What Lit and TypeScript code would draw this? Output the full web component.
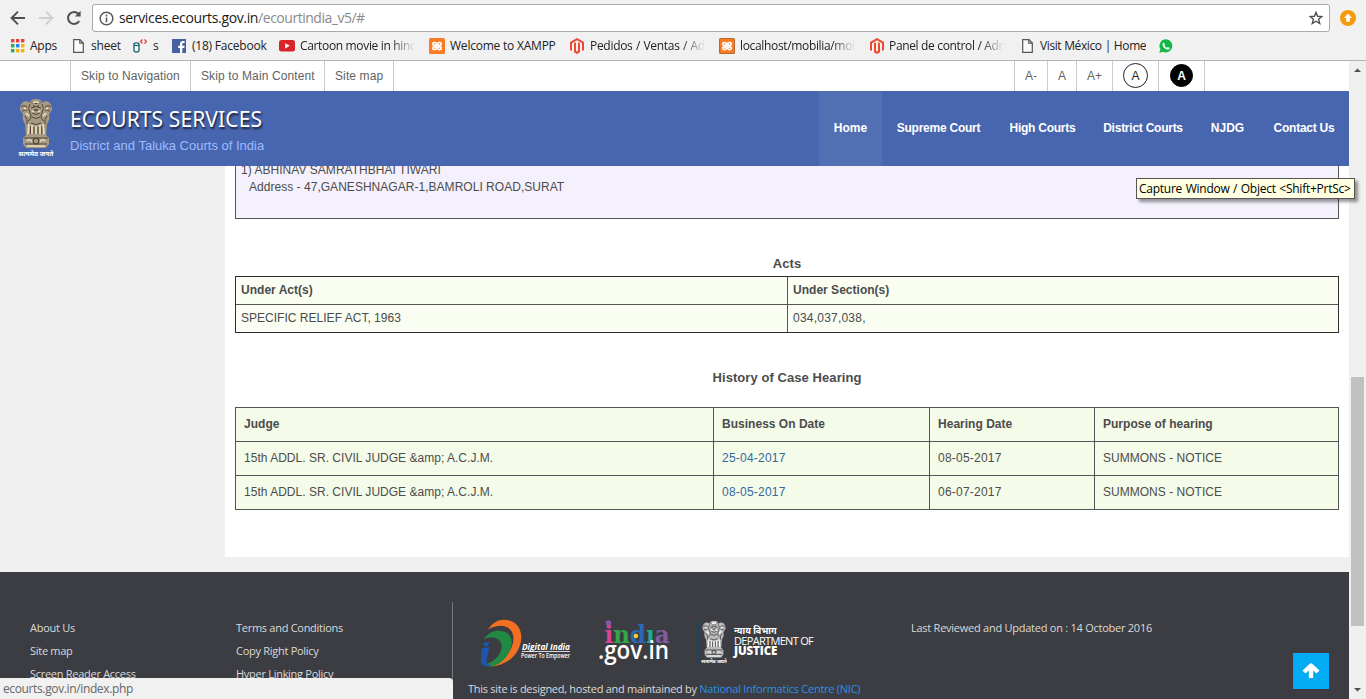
import { LitElement, html, svg, css } from "lit";
import { customElement, property } from "lit/decorators.js";

const pageIcon = svg`<svg width="12" height="14" viewBox="0 0 12 14"><path d="M.7.7H7L10.3 4V13.3H.7Z" fill="#fafafa" stroke="#555" stroke-width="1.2"/><path d="M6.8.8V4.2H10.2" fill="none" stroke="#555" stroke-width="1.2"/></svg>`;
const xamppIcon = (edge: string) => svg`<svg width="16" height="16" viewBox="0 0 16 16"><rect width="16" height="16" rx="1.6" fill=${edge}/><rect x="1" y="1" width="14" height="14" rx="1" fill="#fb7a24"/><rect x="3.800" y="4.500" width="3.400" height="2.800" rx="1.300" fill="none" stroke="#fff" stroke-width="1.700"/><rect x="8.800" y="4.500" width="3.400" height="2.800" rx="1.300" fill="none" stroke="#fff" stroke-width="1.700"/><rect x="3.800" y="8.800" width="3.400" height="2.800" rx="1.300" fill="none" stroke="#fff" stroke-width="1.700"/><rect x="8.800" y="8.800" width="3.400" height="2.800" rx="1.300" fill="none" stroke="#fff" stroke-width="1.700"/><path d="M5 8H11M8 6.500V9.500" stroke="#fff" stroke-width="1.600"/></svg>`;
const magentoIcon = svg`<svg width="14" height="16" viewBox="0 0 14 16"><path d="M7 0L14 4V12L12 13.1V5.2L7 2.3L2 5.2V13.1L0 12V4Z" fill="#ee4a32"/><path d="M4 5.2L6 4.2V13L7 13.6L8 13V4.2L10 5.2V14.3L7 16L4 14.3Z" fill="#ee4a32"/></svg>`;
const icons = {
  apps: svg`<svg width="15" height="14" viewBox="0 0 15 14">${["#ea4335", "#ea4335", "#ea4335", "#34a853", "#2b87f0", "#f5b400", "#34a853", "#f5b400", "#f5b400"].map((c, i) => svg`<rect x=${1 + (i % 3) * 5} y=${Math.floor(i / 3) * 5} width="3.4" height="3.4" fill=${c}/>`)}</svg>`,
  page: pageIcon,
  jar: svg`<svg width="14" height="14" viewBox="0 0 14 14"><path d="M1 5.5V11.5C1 13.5 6 13.5 6 11.5V5.500" fill="#fff" stroke="#155d68" stroke-width="1.3"/><ellipse cx="3.5" cy="5.2" rx="2.6" ry="1.4" fill="#fff" stroke="#155d68" stroke-width="1.2"/><path d="M9.500 .5L7.500 2.500L9.500 4.500M11.500 .5L13.500 2.500L11.500 4.500" fill="none" stroke="#e33" stroke-width="1.2"/></svg>`,
  facebook: svg`<svg width="14" height="14" viewBox="0 0 14 14"><rect width="14" height="14" fill="#4760a2"/><path d="M8 14V8.9H6.2V6.7H8V5C8 3 9.2 2 11 2H12.6V4.1H11.5C10.6 4.1 10.3 4.5 10.3 5.2V6.7H12.6L12.3 8.9H10.3V14Z" fill="#fff"/></svg>`,
  youtube: svg`<svg width="16" height="12" viewBox="0 0 16 12"><rect width="16" height="11.6" rx="2.4" fill="#d9252a"/><path d="M6.2 3.2V8.4L10.8 5.8Z" fill="#fff"/></svg>`,
  xampp: xamppIcon("#fb7a24"),
  xamppDark: xamppIcon("#b9682f"),
  magento: magentoIcon,
  whatsapp: svg`<svg width="14" height="14" viewBox="0 0 14 14"><path d="M7.2.2A6.6 6.6 0 1 1 4 12.8L.3 13.8L1.4 10.2A6.6 6.6 0 0 1 7.2.2Z" fill="#12b845"/><path d="M4.9 3.5L6 5.5L5.4 6.4C5.9 7.5 6.8 8.3 7.9 8.8L8.8 8L10.8 9.1C10.6 10.7 9.2 11 8 10.6C5.7 9.9 4 8.1 3.6 6.1C3.4 4.7 3.9 3.7 4.9 3.5Z" fill="#fff"/></svg>`,
};

const bookmarks: { icon: keyof typeof icons; label: string; cls?: string }[] = [
  { icon: "apps", label: "Apps", cls: "apps" },
  { icon: "page", label: "sheet" },
  { icon: "jar", label: "s" },
  { icon: "facebook", label: "(18) Facebook" },
  { icon: "youtube", label: "Cartoon movie in hindi", cls: "fade tight" },
  { icon: "xampp", label: "Welcome to XAMPP", cls: "near" },
  { icon: "magento", label: "Pedidos / Ventas / Adn", cls: "fade wide" },
  { icon: "xamppDark", label: "localhost/mobilia/mob", cls: "fade tight" },
  { icon: "magento", label: "Panel de control / Adm", cls: "fade tight" },
  { icon: "page", label: "Visit México | Home", cls: "last" },
  { icon: "whatsapp", label: "" },
];

@customElement("lion-emblem")
export class LionEmblem extends LitElement {
  @property() tone = "gold";
  static styles = css`
    :host { display: block; }
    svg { display: block; width: 100%; height: 100%; }
    .motto { font: bold 6.5px "Noto Sans", "Noto Sans Devanagari", "DejaVu Sans", sans-serif; }
  `;
  render() {
    const gold = this.tone === "gold";
    const base = gold ? "#a89a82" : "#b9b9b9";
    const dark = gold ? "#51473c" : "#3c3c40";
    const light = gold ? "#eee0bd" : "#ffffff";
    return html`<svg viewBox="0 0 36 60" preserveAspectRatio="none">
      <path d="M12 5C12 2 15 1 18 1C21 1 24 2 24 5C27 2 32 3 33 7C35 10 34 13 31 16C32 20 31 23 29 26L28 37L31 40V46L28 50H8L5 46V40L8 37L7 26C5 23 4 20 5 16C2 13 1 10 3 7C4 3 9 2 12 5Z" fill=${base}/>
      <path d="M13 4C15 6 21 6 23 4M13 10Q18 7 23 10M3 9Q6 6 9 9M27 9Q30 6 33 9M4 13L9 12M27 12L32 13M12 6Q9 10 12 15T10 23M24 6Q27 10 24 15T26 23M14 15Q18 18 22 15M14 19Q18 22 22 19M7 18Q10 21 9 26M29 18Q26 21 27 26M13 25Q18 28 23 25M6 40H30M7 46H29" fill="none" stroke=${dark} stroke-width="1"/>
      <path d="M15 8H16.5M19.5 8H21M16 12H20" stroke=${dark} stroke-width="1.6"/>
      <path d="M11 26L10 36M14 27V36M18 28V36M22 27V36M25 26L26 36M15 5Q18 3 21 5M14 13L16 14M22 13L20 14M6 10L8 11M30 10L28 11M8 15L11 18M28 15L25 18" fill="none" stroke=${light} stroke-width="1.7"/>
      <path d="M12.5 28V36M16 29V36M20 29V36M23.7 28V36" fill="none" stroke=${dark} stroke-width="1"/>
      <circle cx="18" cy="43" r="2.8" fill=${base} stroke=${dark} stroke-width="1.2"/>
      <path d="M9 43Q12 40 14 44M22 44Q24 40 27 43M9 48H27" fill="none" stroke=${light} stroke-width="1.3"/>
      <text class="motto" x="0.5" y="58" textLength="35" lengthAdjust="spacingAndGlyphs" fill="#fff">सत्यमेव जयते</text>
    </svg>`;
  }
}

@customElement("browser-chrome")
export class BrowserChrome extends LitElement {
  static styles = css`
    :host { display: flex; flex-direction: column; height: 61px; box-sizing: border-box; background: #f1f1f1; border-bottom: 1px solid #b4b4b4; font: 12px "Open Sans", sans-serif; color: #222; padding-top: 4px; }
    svg { display: block; flex: none; }
    .bar { display: flex; height: 28px; }
    .nav { width: 92px; display: flex; align-items: center; padding-left: 10px; box-sizing: border-box; gap: 12px; }
    .omnibox { width: 1238px; box-sizing: border-box; border: 1px solid #a9a9a9; border-radius: 3px; background: #fff; display: flex; align-items: center; padding: 0 6px; }
    .url { flex: 1; margin-left: 5px; font-size: 14px; letter-spacing: -0.35px; color: #1a1a1a; white-space: nowrap; padding-bottom: 2px; }
    .path { color: #8a8a8a; letter-spacing: -0.48px; }
    .ext { margin: 6px 0 0 10px; }
    .marks { display: grid; grid-template-columns: 63px 60px 39px 107px 150px 141px 149px 151px 152px 137px 30px; padding-left: 10px; height: 28px; align-items: center; }
    .mark { display: flex; align-items: center; min-width: 0; gap: 6px; letter-spacing: -0.22px; white-space: nowrap; }
    .label { overflow: hidden; flex: none; margin-top: -1px; }
    .fade .label { width: 115px; -webkit-mask-image: linear-gradient(90deg, #000 80%, transparent 100%); mask-image: linear-gradient(90deg, #000 80%, transparent 100%); }
    .apps, .near { gap: 5px; }
    .tight { letter-spacing: -0.34px; gap: 5px; }
    .wide { letter-spacing: -0.3px; word-spacing: 0.6px; }
    .last { letter-spacing: -0.4px; word-spacing: 0.3px; }
  `;
  render() {
    return html`
      <div class="bar">
        <div class="nav">
          <svg width="16" height="16" viewBox="0 0 16 16"><path d="M15 8H2M8 1.6L1.6 8L8 14.4" fill="none" stroke="#505050" stroke-width="2"/></svg>
          <svg width="16" height="16" viewBox="0 0 16 16"><path d="M1 8H14M8 1.6L14.4 8L8 14.4" fill="none" stroke="#cfcfcf" stroke-width="2"/></svg>
          <svg width="16" height="16" viewBox="0 0 16 16"><path d="M13.2 11A6 6 0 1 1 12.4 3.8" fill="none" stroke="#505050" stroke-width="2"/><path d="M14.6.8V6.6H8.8Z" fill="#505050"/></svg>
        </div>
        <div class="omnibox">
          <svg width="15" height="15" viewBox="0 0 15 15"><circle cx="7.5" cy="7.5" r="6.3" fill="none" stroke="#5a5a5a" stroke-width="1.5"/><path d="M7.5 6.6V11.2M7.5 3.8V5.4" stroke="#5a5a5a" stroke-width="1.6"/></svg>
          <span class="url">services.ecourts.gov.in<span class="path">/ecourtindia_v5/#</span></span>
          <svg width="14" height="14" viewBox="0 0 14 14"><path d="M7 1.4L8.6 5.3L12.9 5.6L9.6 8.3L10.7 12.5L7 10.2L3.3 12.5L4.4 8.3L1.1 5.6L5.4 5.3Z" fill="none" stroke="#505050" stroke-width="1.4"/></svg>
        </div>
        <svg class="ext" width="16" height="16" viewBox="0 0 16 16"><circle cx="8" cy="8" r="8" fill="#f59a0b"/><path d="M8 3.6L12 8H9.8V11.8H6.2V8H4Z" fill="#fff"/></svg>
      </div>
      <div class="marks">
        ${bookmarks.map((b) => html`<div class="mark ${b.cls ?? ""}">${icons[b.icon]}<span class="label">${b.label}</span></div>`)}
      </div>`;
  }
}

@customElement("site-header")
export class SiteHeader extends LitElement {
  static styles = css`
    :host { display: block; font: 12px "Liberation Sans", Arial, sans-serif; }
    .skip { display: flex; height: 30px; background: #fff; color: #626262; padding-left: 70px; line-height: 30px; letter-spacing: 0.12px; }
    .skip span { border-right: 1px solid #ccc; padding: 0 10px; box-sizing: border-box; white-space: nowrap; }
    .skip .s1 { width: 121px; border-left: 1px solid #ccc; }
    .skip .s2 { width: 134px; }
    .skip .s3 { width: 69px; }
    .tools { display: flex; margin-left: 620px; border-left: 1px solid #ccc; }
    .tools .t1 { width: 33px; }
    .tools .t2 { width: 29px; padding: 0 10px; }
    .tools .t3 { width: 36px; padding: 0 10px; letter-spacing: 0; }
    .tools .t4 { width: 46px; display: flex; align-items: center; justify-content: center; padding: 0; }
    .disc { width: 25px; height: 25px; box-sizing: border-box; border: 1px solid #222; border-radius: 50%; line-height: 24px; text-align: center; color: #222; letter-spacing: 0; margin-top: -1px; }
    .disc.dark { background: #000; color: #fff; border-color: #000; font-weight: bold; width: 23px; height: 23px; line-height: 22px; }
    .banner { height: 75px; background: #4865af; display: flex; }
    lion-emblem { width: 36px; height: 60px; margin: 7px 0 0 18px; }
    .brand { margin-left: 16px; padding-top: 13px; flex: 1; }
    .title { font: 21px/31px "Noto Sans", sans-serif; letter-spacing: 0.1px; color: #fff; text-shadow: 1px 2px 2px rgba(0, 0, 0, 0.7); }
    .sub { font-size: 13px; line-height: 22px; color: #9dbcff; }
    nav { display: flex; color: #fff; font-weight: bold; line-height: 74px; letter-spacing: -0.25px; }
    nav span { box-sizing: border-box; text-align: center; white-space: nowrap; }
    .n0 { width: 63px; background: #526fb4; letter-spacing: 0; }
    .n1 { width: 113px; }
    .n2 { width: 95px; }
    .n3 { width: 106px; }
    .n4 { width: 63px; letter-spacing: 0; }
    .n5 { width: 90px; }
  `;
  render() {
    const nav = ["Home", "Supreme Court", "High Courts", "District Courts", "NJDG", "Contact Us"];
    return html`
      <div class="skip">
        <span class="s1">Skip to Navigation</span><span class="s2">Skip to Main Content</span><span class="s3">Site map</span>
        <div class="tools"><span class="t1">A-</span><span class="t2">A</span><span class="t3">A+</span><span class="t4"><div class="disc">A</div></span><span class="t4"><div class="disc dark">A</div></span></div>
      </div>
      <div class="banner">
        <lion-emblem></lion-emblem>
        <div class="brand"><div class="title">ECOURTS SERVICES</div><div class="sub">District and Taluka Courts of India</div></div>
        <nav>${nav.map((n, i) => html`<span class="n${i}">${n}</span>`)}</nav>
      </div>`;
  }
}

@customElement("case-details")
export class CaseDetails extends LitElement {
  static styles = css`
    :host { display: block; height: 391px; margin-left: 225px; background: #fff; padding: 0 10px; overflow: hidden; font: 12px/17px "Liberation Sans", Arial, sans-serif; color: #4c4c4c; box-sizing: border-box; }
    .party { height: 53px; box-sizing: border-box; border: 1px solid #555; border-top: 0; background: #f4f0fc; padding-left: 5px; overflow: hidden; display: flex; flex-direction: column; justify-content: flex-end; padding-bottom: 22px; }
    .name { letter-spacing: 0.03px; }
    .addr { padding-left: 8px; letter-spacing: 0.03px; }
    h3 { margin: 0; font-size: 13px; line-height: 18px; text-align: center; letter-spacing: 0.07px; }
    .h1 { padding-top: 36px; height: 57px; box-sizing: border-box; }
    .h2 { padding-top: 36px; height: 74px; box-sizing: border-box; }
    .grid { display: grid; background: #555; gap: 1px; border: 1px solid #555; letter-spacing: 0.02px; }
    .acts { grid-template-columns: 551px 1fr; grid-auto-rows: 27px; line-height: 26px; border-color: #2e2e2e; }
    .acts div { background: #f9fdf2; padding-left: 5px; }
    .hist { grid-template-columns: 477px 215px 164px 1fr; grid-auto-rows: 33px; line-height: 32px; }
    .hist div { background: #f4fbe8; padding-left: 8px; }
    .grid .b { font-weight: bold; }
    .grid .num { letter-spacing: 0.22px; }
    .grid .link { color: #38679f; }
  `;
  render() {
    const judge = "15th ADDL. SR. CIVIL JUDGE &amp; A.C.J.M.";
    const rows = [[judge, "25-04-2017", "08-05-2017", "SUMMONS - NOTICE"], [judge, "08-05-2017", "06-07-2017", "SUMMONS - NOTICE"]];
    const cellClass = ["", "num link", "num", ""];
    return html`
      <div class="party"><div class="name">1) ABHINAV SAMRATHBHAI TIWARI</div><div class="addr">Address - 47,GANESHNAGAR-1,BAMROLI ROAD,SURAT</div></div>
      <h3 class="h1">Acts</h3>
      <div class="grid acts"><div class="b">Under Act(s)</div><div class="b">Under Section(s)</div><div>SPECIFIC RELIEF ACT, 1963</div><div class="num">034,037,038,</div></div>
      <h3 class="h2">History of Case Hearing</h3>
      <div class="grid hist">
        ${["Judge", "Business On Date", "Hearing Date", "Purpose of hearing"].map((h) => html`<div class="b">${h}</div>`)}
        ${rows.map((r) => r.map((c, i) => html`<div class=${cellClass[i]}>${c}</div>`))}
      </div>`;
  }
}

@customElement("site-footer")
export class SiteFooter extends LitElement {
  static styles = css`
    :host { display: flex; height: 127px; margin-top: 15px; background: #3c3d42; overflow: hidden; font: 11px/23px "Open Sans", sans-serif; color: #dadada; white-space: nowrap; letter-spacing: -0.28px; }
    .links { display: grid; grid-template-columns: 206px 216px; grid-auto-rows: 23px; width: 422px; padding: 44px 0 0 30px; height: 83px; }
    .mid { border-left: 1px solid #77787c; margin-top: 30px; width: 458px; padding: 17px 0 0 15px; box-sizing: border-box; height: 97px; }
    .logos { display: flex; height: 48px; padding-left: 12px; }
    .logos svg { display: block; }
    .di { width: 91px; height: 48px; }
    .ig { width: 72px; height: 48px; margin-left: 28px; }
    .doj { display: flex; margin-left: 27px; border-left: 1px solid #194459; height: 46px; margin-top: 1px; }
    .doj lion-emblem { width: 26px; height: 45px; margin-left: 2px; }
    .dept { margin-left: 7px; color: #fff; font: 11px/10px "Open Sans", sans-serif; padding-top: 5px; }
    .hi { font: bold 9px/11px "Noto Sans", "Noto Sans Devanagari", sans-serif; letter-spacing: 0; }
    .dn { letter-spacing: -0.68px; font-weight: 500; }
    .just { font-weight: 800; letter-spacing: -0.1px; font-size: 11.5px; }
    .credit { margin-top: 10px; line-height: 24px; }
    .credit a { color: #2b8fe8; letter-spacing: -0.25px; }
    .date { padding: 44px 0 0 1px; letter-spacing: -0.25px; }
    .bi { font: italic bold 9.5px "Open Sans", sans-serif; letter-spacing: 0; }
    .sm { font: 600 6.5px "Open Sans", sans-serif; letter-spacing: 0; }
    .in { font: bold 25px "DejaVu Serif", serif; letter-spacing: 0; }
    .gov { font: 600 25px "Open Sans", sans-serif; letter-spacing: 0; }
  `;
  render() {
    return html`
      <div class="links"><span>About Us</span><span>Terms and Conditions</span><span>Site map</span><span>Copy Right Policy</span><span>Screen Reader Access</span><span>Hyper Linking Policy</span></div>
      <div class="mid">
        <div class="logos">
          <svg class="di" viewBox="0 0 91 48">
            <path d="M8 10.500C12 4 18 .8 24 .8C35 1 41.500 8 41.300 19C40.500 34 29 46 11 47.600C24 42 33.500 31 33.500 19C33 7 21 3 8 10.500Z" fill="#f36f21"/>
            <path d="M3.500 20.500C8 14 13 11.500 19 11.800C28 12 32 17.500 31.700 24C30.500 37 20 47 9 47.600L6 45C15 43 21.500 35 21.800 27.500C21.500 19 12 15.500 3.500 20.500Z" fill="#208a43"/>
            <path d="M1.500 29.500L9.500 28L6.500 41C6.300 44.500 8 45.500 11 46.500C4 49 .5 46 1 40Z" fill="#1f55ae"/><path d="M3 24.500Q6 22 9.500 23.500Q9 27 6 27.500Q3.500 27 3 24.500Z" fill="#1f55ae"/>
            <text class="bi" x="42" y="31" textLength="48" lengthAdjust="spacingAndGlyphs" fill="#fff">Digital India</text>
            <path d="M42 32.500H90" stroke="#fff" stroke-width=".8"/>
            <text class="sm" x="41" y="38.500" textLength="49" lengthAdjust="spacingAndGlyphs" fill="#fff">Power To Empower</text>
          </svg>
          <svg class="ig" viewBox="0 0 72 48">
            <text class="in" x="5.500" y="23.500" textLength="65" lengthAdjust="spacingAndGlyphs"><tspan fill="#d9439a">i</tspan><tspan fill="#31a64a">n</tspan><tspan fill="#2a68b6">d</tspan><tspan fill="#1faa92">ı</tspan><tspan fill="#8559a5">a</tspan></text>
            <circle cx="9.500" cy="4" r="2.700" fill="#8559a5"/><circle cx="37" cy="17" r="2.200" fill="#ffd21c"/>
            <text class="gov" x="-1" y="39.500" textLength="71" lengthAdjust="spacingAndGlyphs" fill="#fff">.gov.in</text>
          </svg>
          <div class="doj"><lion-emblem tone="white"></lion-emblem><div class="dept"><div class="hi">न्याय विभाग</div><div class="dn">DEPARTMENT OF</div><div class="just">JUSTICE</div></div></div>
        </div>
        <div class="credit">This site is designed, hosted and maintained by <a>National Informatics Centre (NIC)</a></div>
      </div>
      <div class="date">Last Reviewed and Updated on : 14 October 2016</div>`;
  }
}

@customElement("app-root")
export class AppRoot extends LitElement {
  static styles = css`
    :host { display: block; position: relative; width: 1366px; height: 699px; overflow: hidden; background: #efefef; }
    .view { display: flex; height: 638px; }
    .page { width: 1349px; }
    .scroll { width: 17px; background: #f0f0f0; display: flex; flex-direction: column; align-items: center; }
    .scroll svg { flex: none; }
    .thumb { width: 13px; height: 249px; background: #c1c1c1; margin-top: 299px; }
    .down { margin-top: auto; }
    .tip { position: absolute; left: 1136px; top: 178px; width: 219px; height: 21px; box-sizing: border-box; border: 1px solid #555; background: #ffffe1; box-shadow: 3px 3px 3px rgba(0, 0, 0, 0.4); font: 12px/20px "Open Sans", sans-serif; letter-spacing: -0.25px; word-spacing: 0.7px; color: #000; padding-left: 2px; white-space: nowrap; }
    .status { position: absolute; left: 0; top: 678px; width: 453px; height: 21px; background: #f1f1f1; border-top-right-radius: 4px; font: 12px/21px "Open Sans", sans-serif; letter-spacing: -0.37px; color: #666; padding-left: 3px; box-sizing: border-box; }
    .top { position: absolute; left: 1293px; top: 653px; width: 36px; height: 36px; background: #03acf2; display: flex; align-items: center; justify-content: center; }
  `;
  render() {
    return html`
      <browser-chrome></browser-chrome>
      <div class="view">
        <div class="page"><site-header></site-header><case-details></case-details><site-footer></site-footer></div>
        <div class="scroll">
          <svg width="17" height="17" viewBox="0 0 17 17"><path d="M5 11L8.500 7.500L12 11Z" fill="#505050"/></svg>
          <div class="thumb"></div>
          <svg class="down" width="17" height="17" viewBox="0 0 17 17"><path d="M5 6L8.500 9.500L12 6Z" fill="#505050"/></svg>
        </div>
      </div>
      <div class="tip">Capture Window / Object &lt;Shift+PrtSc&gt;</div>
      <div class="status">ecourts.gov.in/index.php</div>
      <div class="top"><svg width="20" height="20" viewBox="0 0 20 20"><path d="M10 17V5M3 11L10 4.500L17 11" fill="none" stroke="#fff" stroke-width="4.400" stroke-linejoin="round"/></svg></div>`;
  }
}
